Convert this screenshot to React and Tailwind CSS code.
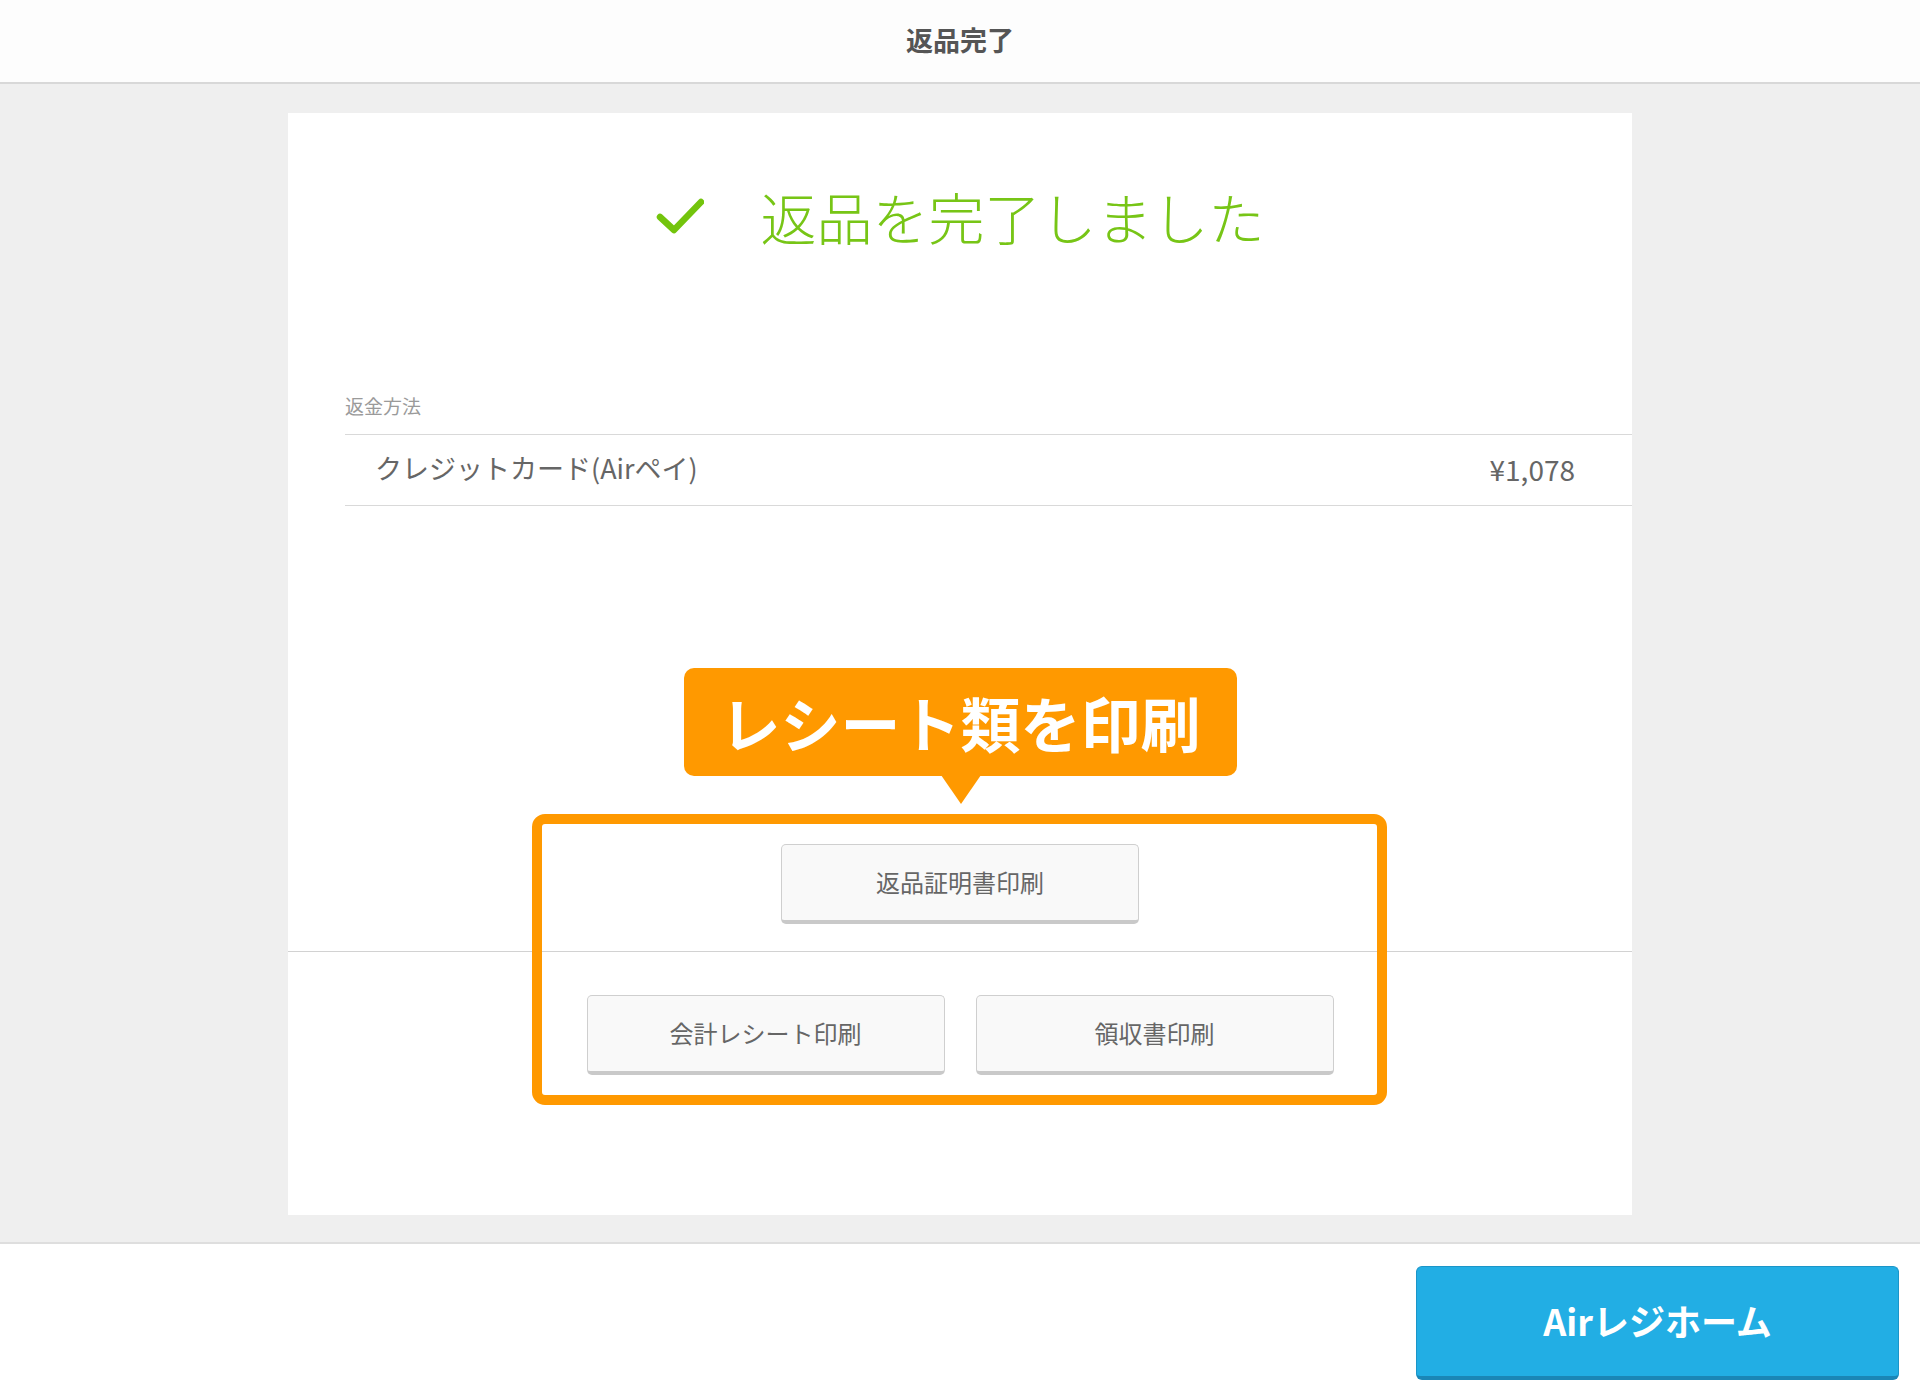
import React from "react";

const FONT = { fontFamily: '"Noto Sans CJK JP", "Noto Sans", sans-serif' };

function PrintButton({ children, className = "" }) {
  return (
    <button
      className={
        "h-[80px] w-[358px] rounded-[5px] border border-b-[4px] border-[#cfcfcf] border-b-[#c9c9c9] bg-[#f9f9f9] pb-[2px] text-[24px] text-[#666666] " +
        className
      }
    >
      {children}
    </button>
  );
}

export default function App() {
  return (
    <div style={FONT} className="flex h-[1400px] w-[1920px] flex-col bg-white">
      {/* Header */}
      <header className="flex h-[84px] shrink-0 items-center justify-center border-b-2 border-[#d8d8d8] bg-[#fdfdfd] pb-[4px]">
        <h1 className="text-[27px] font-bold leading-none text-[#555555]">返品完了</h1>
      </header>

      {/* Main */}
      <main className="flex-1 bg-[#efefef] pt-[29px]">
        <div className="relative mx-auto flex h-[1102px] w-[1344px] flex-col bg-white">
          {/* Upper section */}
          <section className="flex h-[838px] flex-col">
            <div className="flex items-center justify-center pt-[68px] pb-[4px]">
              <svg width="48" height="36" viewBox="0 0 48 36" className="mr-[57px]">
                <path
                  d="M4 19 L18 32 L45 4"
                  fill="none"
                  stroke="#73c40c"
                  strokeWidth="6.5"
                  strokeLinecap="round"
                  strokeLinejoin="round"
                />
              </svg>
              <span className="text-[56px] font-light leading-[70px] text-[#77c516]">
                返品を完了しました
              </span>
            </div>

            <div className="ml-[57px] mt-[137px]">
              <div className="pb-[14px] text-[19px] leading-[28px] text-[#9a9a9a]">返金方法</div>
              <div className="flex h-[72px] items-center justify-between border-y border-[#d9d9d9] pb-[3px] pl-[30px] pr-[57px] text-[27px] text-[#666666]">
                <span>クレジットカード(Airペイ)</span>
                <span className="text-[28px]">¥1,078</span>
              </div>
            </div>

            <div className="flex-1" />

            <div className="flex justify-center pb-[27px]">
              <PrintButton>返品証明書印刷</PrintButton>
            </div>
          </section>

          {/* Lower section */}
          <section className="flex flex-1 justify-center gap-[31px] border-t border-[#d2d2d2] pt-[43px]">
            <PrintButton>会計レシート印刷</PrintButton>
            <PrintButton>領収書印刷</PrintButton>
          </section>

          {/* Annotation: callout */}
          <div className="absolute left-[396px] top-[555px] flex h-[108px] w-[553px] items-center justify-center rounded-[10px] bg-[#ff9900]">
            <span className="text-[60px] font-bold leading-none text-white">レシート類を印刷</span>
            <svg
              width="40"
              height="29"
              viewBox="0 0 40 29"
              className="absolute left-1/2 top-[107px] -translate-x-1/2"
            >
              <path d="M0 0 L40 0 L20 29 Z" fill="#ff9900" />
            </svg>
          </div>

          {/* Annotation: frame */}
          <div className="pointer-events-none absolute left-[244px] top-[701px] h-[291px] w-[855px] rounded-[13px] border-[10px] border-[#ff9900]" />
        </div>
      </main>

      {/* Footer */}
      <footer className="flex h-[158px] shrink-0 justify-end border-t-2 border-[#dedede] bg-white pr-[21px] pt-[22px]">
        <button className="h-[114px] w-[483px] rounded-[6px] border border-b-[4px] border-[#1b95c8] border-b-[#1a86b6] bg-[#22aee4] pb-[3px] text-[36px] font-bold text-white">
          Airレジホーム
        </button>
      </footer>
    </div>
  );
}
